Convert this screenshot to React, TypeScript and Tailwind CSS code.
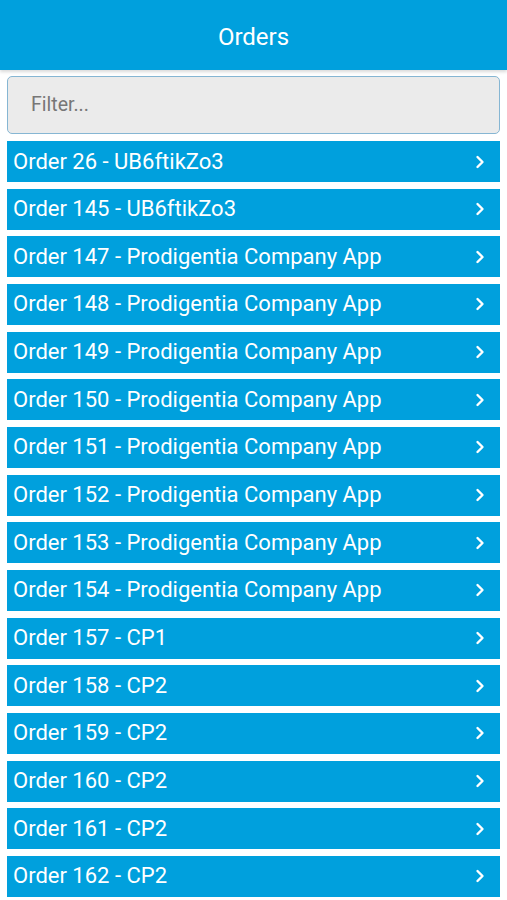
import React from "react";

const orders = [
  "Order 26 - UB6ftikZo3",
  "Order 145 - UB6ftikZo3",
  "Order 147 - Prodigentia Company App",
  "Order 148 - Prodigentia Company App",
  "Order 149 - Prodigentia Company App",
  "Order 150 - Prodigentia Company App",
  "Order 151 - Prodigentia Company App",
  "Order 152 - Prodigentia Company App",
  "Order 153 - Prodigentia Company App",
  "Order 154 - Prodigentia Company App",
  "Order 157 - CP1",
  "Order 158 - CP2",
  "Order 159 - CP2",
  "Order 160 - CP2",
  "Order 161 - CP2",
  "Order 162 - CP2",
];

function Chevron() {
  return (
    <svg width="10" height="14" viewBox="0 0 10 14" fill="none" className="shrink-0">
      <path d="M2.5 2 L7.5 7 L2.5 12" stroke="white" strokeWidth="2.4" strokeLinecap="round" strokeLinejoin="round" />
    </svg>
  );
}

export default function App() {
  return (
    <div className="w-[507px] h-[900px] bg-white overflow-hidden" style={{ fontFamily: "Roboto, 'Noto Sans', sans-serif" }}>
      <div className="h-[70px] bg-[#00a0dd] flex items-center justify-center shadow-[0_2px_3px_rgba(0,0,0,0.15)] relative z-10">
        <span className="text-white text-[24px] leading-none mt-[3px]">Orders</span>
      </div>
      <div className="px-[7px] pt-[6px]">
        <div className="h-[58px] rounded-[5px] border-[1.5px] border-[#86b6d3] bg-[#ebebeb] flex items-center pl-[23px]">
          <span className="text-[#777777] text-[19.5px]">Filter...</span>
        </div>
        <div className="mt-[7px] flex flex-col gap-[6.67px]">
          {orders.map((o) => (
            <div key={o} className="h-[41px] bg-[#00a0dd] flex items-center justify-between pl-[6px] pr-[15px]">
              <span className="text-white text-[22px] leading-none whitespace-nowrap">{o}</span>
              <Chevron />
            </div>
          ))}
        </div>
      </div>
    </div>
  );
}
